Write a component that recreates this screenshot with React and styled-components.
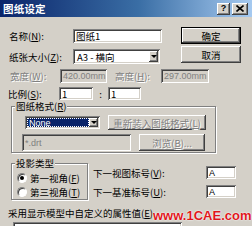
import React from "react";
import styled, { createGlobalStyle } from "styled-components";

const GlobalStyle = createGlobalStyle`
  html, body { margin: 0; padding: 0; background: #d4d0c8; }
  body {
    font-family: "Noto Sans CJK SC", "Noto Sans", sans-serif;
    font-size: 9.5px;
    line-height: 12px;
    color: #000;
  }
  u { text-decoration-thickness: 1px; text-underline-offset: 1px; }
`;

const raised = `
  box-shadow: inset -1px -1px #404040, inset 1px 1px #ffffff,
    inset -2px -2px #808080, inset 2px 2px #d4d0c8;
`;
const sunken = `
  box-shadow: inset 1px 1px #808080, inset -1px -1px #ffffff,
    inset 2px 2px #404040, inset -2px -2px #d4d0c8;
`;

const Window = styled.div`
  width: 252px;
  height: 226px;
  overflow: hidden;
  position: relative;
  background: #d4d0c8;
`;

const TitleBar = styled.div`
  height: 17px;
  display: flex;
  align-items: center;
  padding: 0 4px 0 3px;
  background: linear-gradient(90deg, #0a246a 0%, #3a6ea5 55%, #a6caf0 100%);
`;

const TitleText = styled.div`
  flex: 1;
  color: #fff;
  font-weight: bold;
  font-size: 10.5px;
  letter-spacing: 0.2px;
`;

const CapButton = styled.div`
  width: ${(p) => p.$w}px;
  height: 12px;
  margin-left: ${(p) => p.$ml || 0}px;
  background: #d4d0c8;
  ${raised}
  display: flex;
  align-items: center;
  justify-content: center;
  font-family: "Liberation Sans", sans-serif;
  font-weight: bold;
  font-size: 9px;
  line-height: 9px;
  color: #000;
`;

const Top = styled.div`
  display: flex;
  margin-top: 10px;
`;

const FieldsCol = styled.div`
  margin-left: 9px;
  width: 154px;
  padding-top: 2px;
  display: flex;
  flex-direction: column;
  gap: 6px;
`;

const FormRow = styled.div`
  display: flex;
  align-items: center;
  height: ${(p) => p.$h}px;
  margin-top: ${(p) => p.$mt || 0}px;
  padding-left: ${(p) => p.$pl || 0}px;
`;

const Label = styled.span`
  flex: none;
  width: ${(p) => p.$w}px;
  margin-left: ${(p) => p.$ml || 0}px;
  white-space: nowrap;
  color: ${(p) => (p.$disabled ? "#808080" : "#000")};
  text-shadow: ${(p) => (p.$disabled ? "1px 1px 0 #fff" : "none")};
`;

const TextBox = styled.div`
  flex: none;
  box-sizing: border-box;
  width: ${(p) => p.$w}px;
  height: ${(p) => p.$h}px;
  margin-left: ${(p) => p.$ml || 0}px;
  padding: 0 3px;
  display: flex;
  align-items: center;
  white-space: nowrap;
  overflow: hidden;
  background: ${(p) => (p.$disabled ? "#d4d0c8" : "#fff")};
  color: ${(p) => (p.$disabled ? "#808080" : "#000")};
  ${sunken}
`;

const Mono = styled.span`
  font-family: "Liberation Sans", sans-serif;
  font-size: 9px;
`;

const SelectBox = styled.div`
  flex: none;
  box-sizing: border-box;
  width: ${(p) => p.$w}px;
  height: ${(p) => p.$h}px;
  padding: 2px;
  display: flex;
  align-items: stretch;
  background: #fff;
  ${sunken}
`;

const SelectValue = styled.div`
  flex: 1;
  display: flex;
  align-items: center;
  padding-left: 2px;
  white-space: nowrap;
  overflow: hidden;
  background: ${(p) => (p.$selected ? "#0a246a" : "transparent")};
  color: ${(p) => (p.$selected ? "#fff" : "#000")};
  outline: ${(p) => (p.$selected ? "1px dotted #ffffff" : "none")};
  outline-offset: -1px;
`;

const ArrowBtn = styled.div`
  flex: none;
  width: ${(p) => p.$w}px;
  background: #d4d0c8;
  ${raised}
  display: flex;
  align-items: center;
  justify-content: center;
`;

const Arrow = styled.div`
  width: 0;
  height: 0;
  border-left: 3px solid transparent;
  border-right: 3px solid transparent;
  border-top: 3px solid #000;
`;

const ButtonsCol = styled.div`
  margin-left: 18px;
  display: flex;
  flex-direction: column;
  gap: 2px;
`;

const Button = styled.div`
  flex: none;
  box-sizing: border-box;
  width: ${(p) => p.$w}px;
  height: ${(p) => p.$h}px;
  margin-left: ${(p) => p.$ml || 0}px;
  display: flex;
  align-items: center;
  justify-content: center;
  white-space: nowrap;
  background: #d4d0c8;
  border: ${(p) => (p.$default ? "1px solid #000" : "none")};
  ${raised}
  color: ${(p) => (p.$disabled ? "#808080" : "#000")};
  text-shadow: ${(p) => (p.$disabled ? "1px 1px 0 #fff" : "none")};
`;

const Colon = styled.span`
  flex: none;
  width: 15px;
  text-align: center;
`;

const Group = styled.div`
  position: relative;
  box-sizing: border-box;
  margin-top: ${(p) => p.$mt || 0}px;
  margin-left: 11px;
  width: ${(p) => p.$w}px;
  height: ${(p) => (p.$h ? p.$h + "px" : "auto")};
  padding-bottom: 1px;
  border: 1px solid #808080;
  box-shadow: inset 1px 1px #fff, 1px 1px 0 #fff;
`;

const Legend = styled.span`
  position: absolute;
  top: -7px;
  left: 3px;
  padding: 0 1px;
  background: #d4d0c8;
  white-space: nowrap;
`;

const GroupRow = styled.div`
  display: flex;
  align-items: center;
  margin-top: ${(p) => p.$mt || 0}px;
  padding-left: ${(p) => p.$pl || 0}px;
`;

const Bottom = styled.div`
  display: flex;
  margin-top: 10px;
`;

const RadioList = styled.div`
  padding: 7px 0 0 5px;
  display: flex;
  flex-direction: column;
  gap: 1px;
`;

const RadioRow = styled.div`
  height: 13px;
  display: flex;
  align-items: center;
  gap: 3px;
  white-space: nowrap;
`;

const RadioCircle = styled.div`
  box-sizing: border-box;
  width: 10px;
  height: 10px;
  border-radius: 50%;
  background: #fff;
  border: 1px solid;
  border-color: #808080 #ffffff #ffffff #808080;
  box-shadow: inset 1px 1px #404040;
  display: flex;
  align-items: center;
  justify-content: center;
  &::after {
    content: "";
    width: 4px;
    height: 4px;
    border-radius: 50%;
    background: ${(p) => (p.$checked ? "#000" : "transparent")};
  }
`;

const NumbersCol = styled.div`
  margin-left: 5px;
  padding-top: 3px;
  display: flex;
  flex-direction: column;
  gap: 6px;
`;

const Caption = styled.div`
  margin-top: 7px;
  padding-left: 8px;
  white-space: nowrap;
`;

const Watermark = styled.div`
  position: absolute;
  left: 153px;
  top: 209px;
  font-family: "Liberation Sans", Arial, sans-serif;
  font-weight: bold;
  font-size: 13px;
  line-height: 13px;
  color: #e0161c;
  text-shadow: 0 0 2px #fff, 0 0 1px #fff;
  white-space: nowrap;
`;

export default function App() {
  return (
    <>
      <GlobalStyle />
      <Window>
        <TitleBar>
          <TitleText>图纸设定</TitleText>
          <CapButton $w={13}>?</CapButton>
          <CapButton $w={16} $ml={2}>
            <svg width="8" height="7" viewBox="0 0 8 7">
              <path d="M0.5 0.5 L7.5 6.5 M7.5 0.5 L0.5 6.5" stroke="#000" strokeWidth="1.6" />
            </svg>
          </CapButton>
        </TitleBar>

        <Top>
          <FieldsCol>
            <FormRow $h={14}>
              <Label $w={64}>
                名称(<u>N</u>):
              </Label>
              <TextBox $w={89} $h={14}>图纸1</TextBox>
            </FormRow>
            <FormRow $h={15}>
              <Label $w={64}>
                纸张大小(<u>Z</u>):
              </Label>
              <SelectBox $w={87} $h={15}>
                <SelectValue>A3 - 横向</SelectValue>
                <ArrowBtn $w={9}>
                  <Arrow />
                </ArrowBtn>
              </SelectBox>
            </FormRow>
          </FieldsCol>
          <ButtonsCol>
            <Button $w={60} $h={17} $default>
              确定
            </Button>
            <Button $w={60} $h={17}>
              取消
            </Button>
          </ButtonsCol>
        </Top>

        <FormRow $h={14} $mt={5} $pl={10}>
          <Label $w={50} $disabled>
            宽度(<u>W</u>):
          </Label>
          <TextBox $w={47} $h={14} $disabled>
            <Mono>420.00mm</Mono>
          </TextBox>
          <Label $w={46} $ml={8} $disabled>
            高度(<u>H</u>):
          </Label>
          <TextBox $w={48} $h={14} $disabled>
            <Mono>297.00mm</Mono>
          </TextBox>
        </FormRow>

        <FormRow $h={13} $mt={4} $pl={8}>
          <Label $w={51}>
            比例(<u>S</u>):
          </Label>
          <TextBox $w={34} $h={13}>
            1
          </TextBox>
          <Colon>:</Colon>
          <TextBox $w={33} $h={13}>
            1
          </TextBox>
        </FormRow>

        <Group $mt={6} $w={205}>
          <Legend>
            图纸格式(<u>R</u>)
          </Legend>
          <GroupRow $mt={8} $pl={13}>
            <SelectBox $w={75} $h={13}>
              <SelectValue $selected>
                <Mono>None</Mono>
              </SelectValue>
              <ArrowBtn $w={9}>
                <Arrow />
              </ArrowBtn>
            </SelectBox>
            <Button $w={98} $h={15} $ml={8} $disabled>
              重新装入图纸格式(<u>L</u>)
            </Button>
          </GroupRow>
          <GroupRow $mt={4} $pl={10}>
            <TextBox $w={109} $h={17} $disabled>
              <Mono>*.drt</Mono>
            </TextBox>
            <Button $w={66} $h={17} $ml={8} $disabled>
              浏览(<u>B</u>)...
            </Button>
          </GroupRow>
        </Group>

        <Bottom>
          <Group $w={77} $h={37}>
            <Legend>投影类型</Legend>
            <RadioList>
              <RadioRow>
                <RadioCircle $checked />
                <span>
                  第一视角(<u>F</u>)
                </span>
              </RadioRow>
              <RadioRow>
                <RadioCircle />
                <span>
                  第三视角(<u>T</u>)
                </span>
              </RadioRow>
            </RadioList>
          </Group>
          <NumbersCol>
            <FormRow $h={13}>
              <Label $w={113}>
                下一视图标号(<u>V</u>):
              </Label>
              <TextBox $w={30} $h={13}>
                <Mono>A</Mono>
              </TextBox>
            </FormRow>
            <FormRow $h={13}>
              <Label $w={113}>
                下一基准标号(<u>U</u>):
              </Label>
              <TextBox $w={30} $h={13}>
                <Mono>A</Mono>
              </TextBox>
            </FormRow>
          </NumbersCol>
        </Bottom>

        <Caption>
          采用显示模型中自定义的属性值(<u>E</u>)
        </Caption>
        <FormRow $h={14} $mt={3} $pl={13}>
          <TextBox $w={169} $h={14} />
        </FormRow>

        <Watermark>www.1CAE.com</Watermark>
      </Window>
    </>
  );
}
